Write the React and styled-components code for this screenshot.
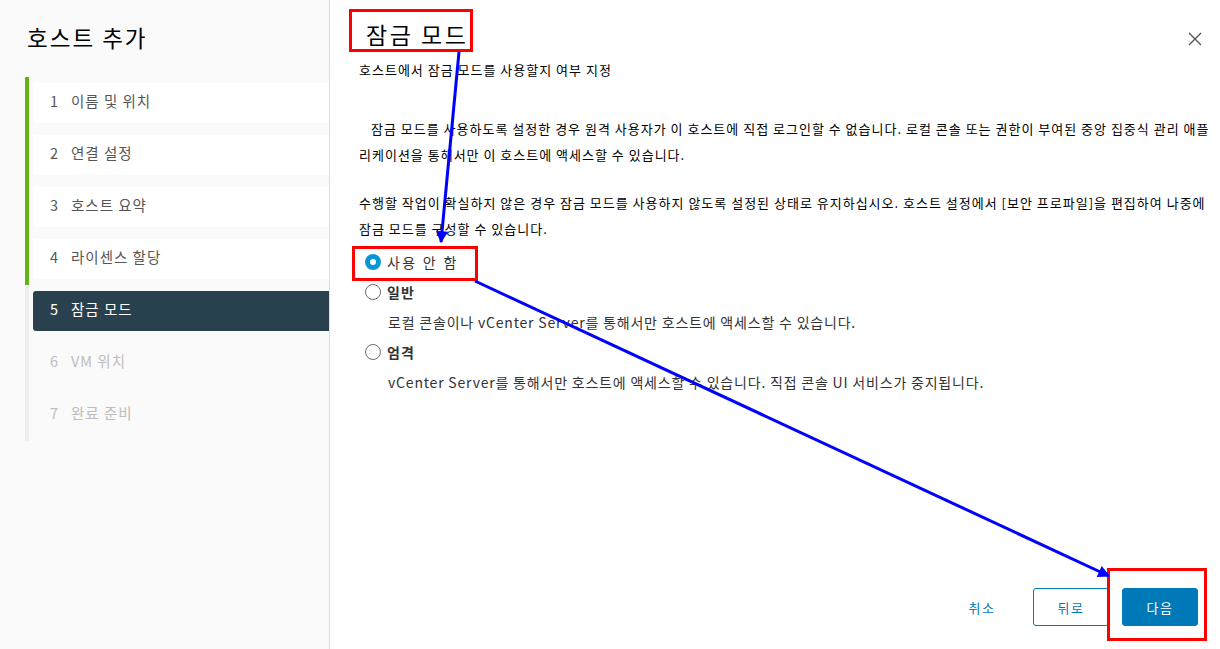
import React from 'react'
import styled, { createGlobalStyle } from 'styled-components'

const GlobalStyle = createGlobalStyle`
  html, body {
    margin: 0;
    padding: 0;
    background: #ffffff;
  }
  body {
    font-family: "Noto Sans CJK KR", "Noto Sans", sans-serif;
    color: #000;
  }
`

const Page = styled.div`
  position: relative;
  width: 1220px;
  height: 649px;
  display: flex;
  overflow: hidden;
`

const Sidebar = styled.aside`
  width: 330px;
  flex: none;
  background: #fafafa;
  border-right: 1px solid #dddddd;
  padding: 22px 0 0 25px;
  box-sizing: border-box;
`

const SideTitle = styled.h2`
  margin: 0 0 24px 2px;
  font-size: 22.5px;
  font-weight: 400;
  line-height: 30px;
  letter-spacing: 2px;
  color: #000;
`

const StepList = styled.ol`
  list-style: none;
  margin: 0;
  padding: 1px 0 0;
`

const StepRow = styled.li`
  padding: 6px 0;
  border-left: 4px solid ${({ done }) => (done ? '#60b515' : '#eeeeee')};
`

const StepCard = styled.div`
  margin-left: 4px;
  height: 40px;
  box-sizing: border-box;
  display: flex;
  align-items: center;
  padding: 0 0 5px 17px;
  border-radius: 3px 0 0 3px;
  font-size: 14.5px;
  letter-spacing: 1px;
  background: ${({ state }) =>
    state === 'active' ? '#29404e' : state === 'done' ? '#ffffff' : 'transparent'};
  color: ${({ state }) =>
    state === 'active' ? '#ffffff' : state === 'done' ? '#565656' : '#bdbdbd'};
`

const StepNum = styled.span`
  width: 21px;
  flex: none;
  letter-spacing: 0;
`

const Main = styled.main`
  flex: 1;
  min-width: 0;
  overflow: hidden;
  display: flex;
  flex-direction: column;
  padding: 18px 18px 23px 29px;
  box-sizing: border-box;
`

const Header = styled.div`
  display: flex;
  justify-content: space-between;
  align-items: flex-start;
`

const Title = styled.h1`
  margin: 0 0 0 7px;
  font-size: 23px;
  font-weight: 400;
  line-height: 32px;
  letter-spacing: 2.5px;
`

const CloseButton = styled.button`
  margin-top: 14px;
  width: 14px;
  height: 14px;
  padding: 0;
  border: none;
  background: none;
  display: flex;
`

const Subtitle = styled.p`
  margin: 10px 0 0;
  font-size: 13px;
  line-height: 20px;
  letter-spacing: 1px;
`

const Para = styled.p`
  margin: ${({ top }) => top}px 0 0;
  font-size: 13px;
  line-height: 25.5px;
  letter-spacing: 1px;
  white-space: nowrap;
`

const Indent = styled.span`
  padding-left: 12px;
`

const Options = styled.div`
  margin-top: 6px;
  display: flex;
  flex-direction: column;
`

const OptionRow = styled.label`
  height: 30px;
  display: flex;
  align-items: center;
  gap: 6px;
  padding-left: 6px;
  font-size: 14px;
  color: #333;
  font-weight: ${({ bold }) => (bold ? 700 : 400)};
  letter-spacing: ${({ spaced }) => (spaced ? '2.3px' : '1px')};
`

const Radio = styled.span`
  width: 16px;
  height: 16px;
  box-sizing: border-box;
  border-radius: 50%;
  flex: none;
  display: flex;
  align-items: center;
  justify-content: center;
  border: ${({ checked }) => (checked ? '5px solid #0a95d5' : '1px solid #6f6f6f')};
  background: #fff;
`

const OptionDesc = styled.div`
  height: 30px;
  display: flex;
  align-items: center;
  padding-left: 29px;
  font-size: 14px;
  letter-spacing: 0.8px;
  color: #333;
`

const Footer = styled.div`
  margin: auto 4px 0 0;
  display: flex;
  justify-content: flex-end;
  gap: 13px;
`

const Button = styled.button`
  width: 76px;
  height: 38px;
  box-sizing: border-box;
  border-radius: 3px;
  font-family: inherit;
  font-size: 13px;
  letter-spacing: 1.5px;
  border: 1px solid ${({ variant }) => (variant === 'link' ? 'transparent' : '#0079b8')};
  background: ${({ variant }) => (variant === 'primary' ? '#0079b8' : '#fff')};
  color: ${({ variant }) => (variant === 'primary' ? '#fff' : '#0079b8')};
`

const Annotations = styled.svg`
  position: absolute;
  left: 0;
  top: 0;
  pointer-events: none;
`

const steps = [
  { n: 1, label: '이름 및 위치', state: 'done' },
  { n: 2, label: '연결 설정', state: 'done' },
  { n: 3, label: '호스트 요약', state: 'done' },
  { n: 4, label: '라이센스 할당', state: 'done' },
  { n: 5, label: '잠금 모드', state: 'active' },
  { n: 6, label: 'VM 위치', state: 'todo' },
  { n: 7, label: '완료 준비', state: 'todo' },
]

export default function App() {
  return (
    <>
      <GlobalStyle />
      <Page>
        <Sidebar>
          <SideTitle>호스트 추가</SideTitle>
          <StepList>
            {steps.map(s => (
              <StepRow key={s.n} done={s.state === 'done'}>
                <StepCard state={s.state}>
                  <StepNum>{s.n}</StepNum>
                  {s.label}
                </StepCard>
              </StepRow>
            ))}
          </StepList>
        </Sidebar>

        <Main>
          <Header>
            <Title>잠금 모드</Title>
            <CloseButton aria-label="닫기">
              <svg width="14" height="14" viewBox="0 0 14 14">
                <path d="M1 1L13 13M13 1L1 13" stroke="#555" strokeWidth="1.4" />
              </svg>
            </CloseButton>
          </Header>
          <Subtitle>호스트에서 잠금 모드를 사용할지 여부 지정</Subtitle>
          <Para top={36}>
            <Indent />잠금 모드를 사용하도록 설정한 경우 원격 사용자가 이 호스트에 직접 로그인할 수 없습니다. 로컬 콘솔 또는 권한이 부여된 중앙 집중식 관리 애플
            <br />
            리케이션을 통해서만 이 호스트에 액세스할 수 있습니다.
          </Para>
          <Para top={23}>
            수행할 작업이 확실하지 않은 경우 잠금 모드를 사용하지 않도록 설정된 상태로 유지하십시오. 호스트 설정에서 [보안 프로파일]을 편집하여 나중에
            <br />
            잠금 모드를 구성할 수 있습니다.
          </Para>
          <Options>
            <OptionRow spaced>
              <Radio checked />
              사용 안 함
            </OptionRow>
            <OptionRow bold>
              <Radio />
              일반
            </OptionRow>
            <OptionDesc>로컬 콘솔이나 vCenter Server를 통해서만 호스트에 액세스할 수 있습니다.</OptionDesc>
            <OptionRow bold>
              <Radio />
              엄격
            </OptionRow>
            <OptionDesc>vCenter Server를 통해서만 호스트에 액세스할 수 있습니다. 직접 콘솔 UI 서비스가 중지됩니다.</OptionDesc>
          </Options>
          <Footer>
            <Button variant="link">취소</Button>
            <Button>뒤로</Button>
            <Button variant="primary">다음</Button>
          </Footer>
        </Main>

        <Annotations width="1220" height="649" viewBox="0 0 1220 649">
          <defs>
            <marker id="head" viewBox="0 0 10 10" refX="9" refY="5" markerWidth="5" markerHeight="4" orient="auto" markerUnits="strokeWidth">
              <path d="M0 0L10 5L0 10Z" fill="#0000ff" />
            </marker>
          </defs>
          <g fill="none" stroke="#ff0000" strokeWidth="3">
            <rect x="350.5" y="10.5" width="121" height="40" />
            <rect x="353.5" y="247.5" width="123" height="32" />
            <rect x="1108.5" y="569.5" width="97" height="70" />
          </g>
          <g stroke="#0000ff" strokeWidth="3" fill="none">
            <line x1="459" y1="52" x2="441" y2="242" markerEnd="url(#head)" />
            <line x1="475" y1="281" x2="1109" y2="576" markerEnd="url(#head)" />
          </g>
        </Annotations>
      </Page>
    </>
  )
}
